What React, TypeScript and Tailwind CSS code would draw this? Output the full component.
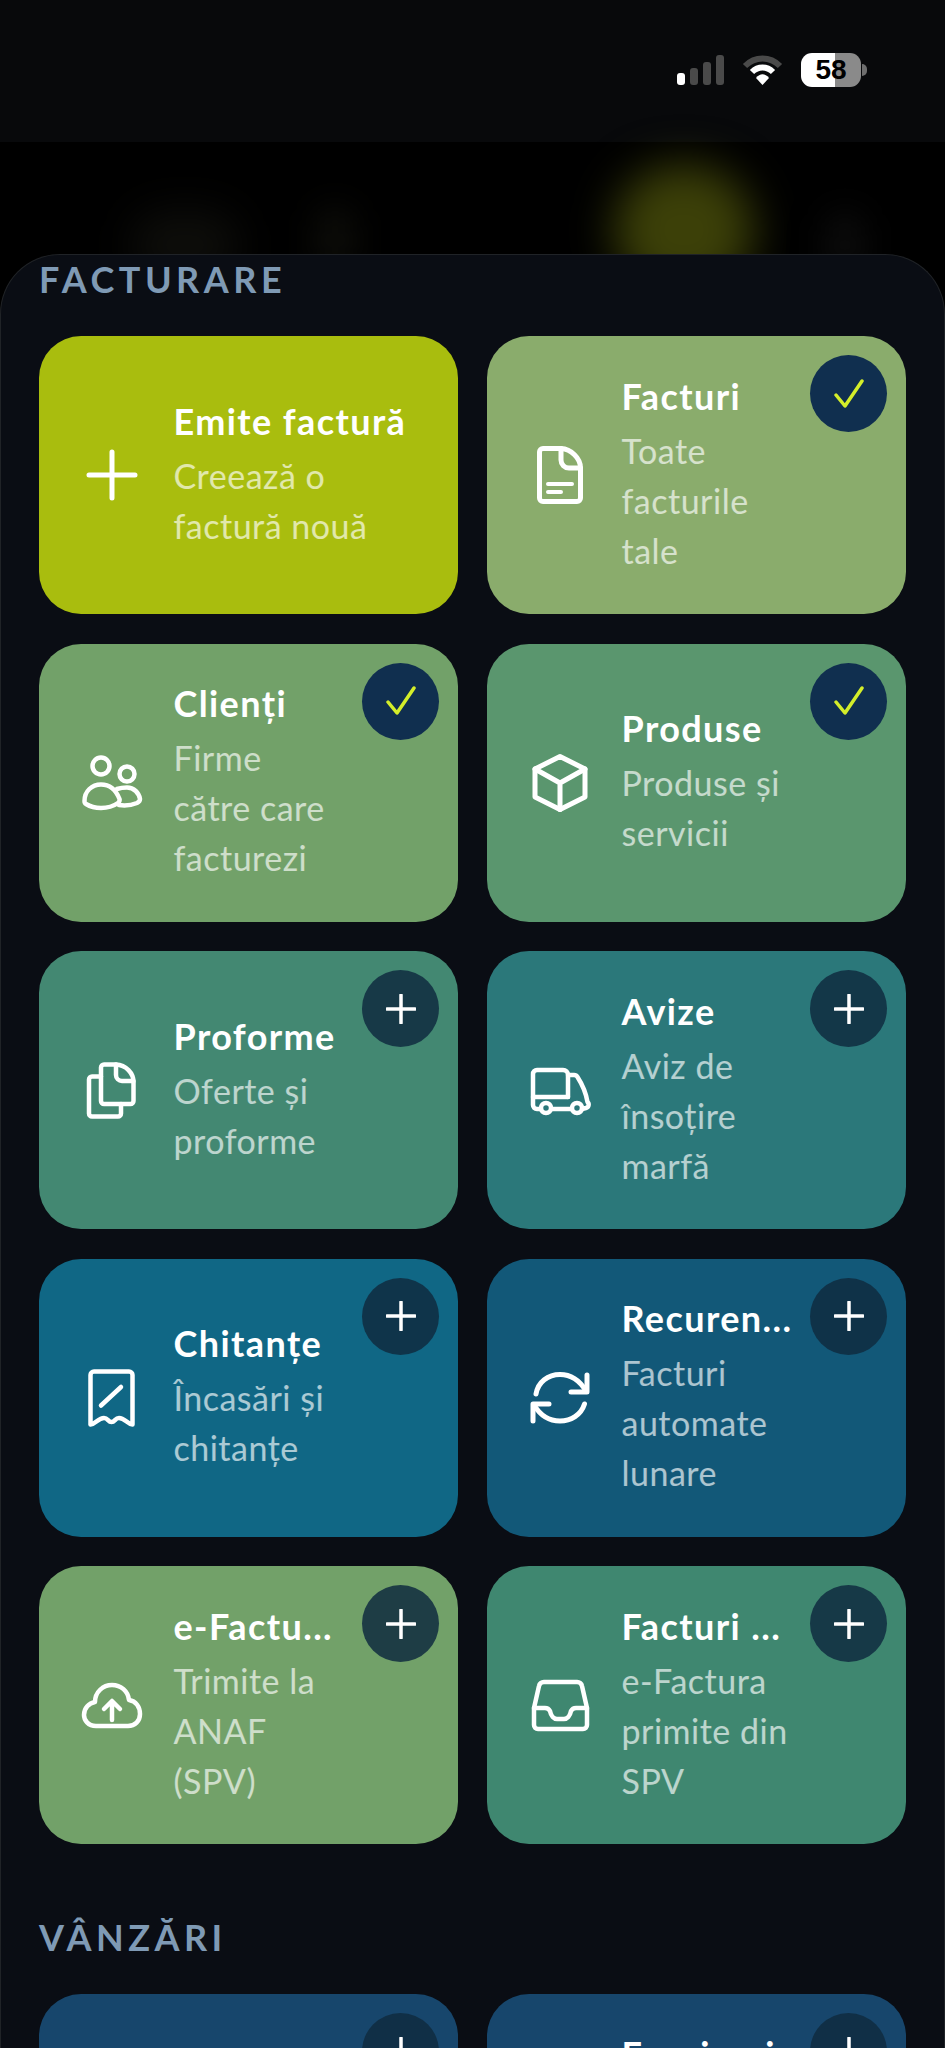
import type { ReactNode } from 'react'

type Tile = {
  title: string
  lines: string[]
  bg: string
  icon: ReactNode
  status?: 'added' | 'add' | 'none'
}

function Glyph({ children, width = 5 }: { children: ReactNode; width?: number }) {
  return (
    <svg
      viewBox="0 0 60 60"
      fill="none"
      stroke="currentColor"
      strokeWidth={width}
      strokeLinecap="round"
      strokeLinejoin="round"
      className="h-[60px] w-[60px] shrink-0 overflow-visible text-white"
    >
      {children}
    </svg>
  )
}

const PlusIcon = (
  <Glyph width={5}>
    <path d="M7 30H53M30 7V53" />
  </Glyph>
)

const FileIcon = (
  <Glyph>
    <path d="M13 3.5H31C41 4 50.5 13 50.5 23V53a3.5 3.5 0 0 1-3.5 3.5H13a3.5 3.5 0 0 1-3.5-3.5V7A3.5 3.5 0 0 1 13 3.5Z" />
    <path d="M31 3.5V15a8 8 0 0 0 8 8H50.5" />
    <path d="M18 39H42M18 47H31" strokeWidth={4} />
  </Glyph>
)

const UsersIcon = (
  <Glyph width={4.5}>
    <circle cx="19" cy="13" r="8.5" />
    <circle cx="45" cy="21" r="7.5" />
    <path d="M2.5 48C2.5 38 10 31.5 19 31.5C28 31.5 34 37 37.5 46C38 47.5 37 49 36 50C31 53.5 25 55 19 55C13 55 8 53.5 4 51C3 50.5 2.5 49.5 2.5 48Z" />
    <path d="M35 36C38 35 41 34.5 45 34.5C52 34.5 57 40 58 46C58 48 57 49 55 50C50 52 44 53 37 52" />
  </Glyph>
)

const BoxIcon = (
  <Glyph>
    <path d="M30 3.5L55 16V44L30 56.5L5 44V16Z" />
    <path d="M5 16L30 30L55 16M30 30V56.5" />
  </Glyph>
)

const CopyIcon = (
  <Glyph width={4.5}>
    <path d="M22 4.5H34C44 5 51.5 13 51.5 22V41a3 3 0 0 1-3 3H22a3 3 0 0 1-3-3V7.5a3 3 0 0 1 3-3Z" />
    <path d="M34 4.5V15a6 6 0 0 0 6 6H51.5" />
    <path d="M19 16.5H10a3 3 0 0 0-3 3V53.5a3 3 0 0 0 3 3H36a3 3 0 0 0 3-3V44" />
  </Glyph>
)

const TruckIcon = (
  <Glyph width={4.5}>
    <path d="M11 49H7a4 4 0 0 1-4-4V14a4 4 0 0 1 4-4H33a5 5 0 0 1 5 5V37" />
    <path d="M3 37H38M22 49H41" />
    <path d="M38 15H44a4 4 0 0 1 3.5 2C52 24 56 33 57.5 42a3.5 3.5 0 0 1-1.5 6L52 49" />
    <circle cx="16" cy="48" r="5" />
    <circle cx="47" cy="48" r="5" />
  </Glyph>
)

const ReceiptIcon = (
  <Glyph width={4.5}>
    <path d="M8.5 7A3.5 3.5 0 0 1 12 3.5H47A3.5 3.5 0 0 1 50.5 7V56.5C45 56 43 50 37 50C33 50 33 54 29.5 54C26 54 26 50 22 50C16 50 14 56 8.5 56.5Z" />
    <path d="M19 37.5L39 19" />
  </Glyph>
)

const RefreshIcon = (
  <Glyph>
    <path d="M6 26C8 14 18 6.5 30 6.5C41 6.5 50 13 56 23" />
    <path d="M54.5 36C51 47 41 53 30 53C19 53 10 47 4 37" />
    <path d="M57 7V24H41M3 53V36H19" />
  </Glyph>
)

const CloudIcon = (
  <Glyph width={4.5}>
    <path d="M14 51C6 51 2 45 2 40C2 33 7 28 13 27C13 17 21 10 30 10C39 10 46 16 47 25C54 26 58 32 58 39C58 46 53 51 46 51Z" />
    <path d="M30 45V27M22 34L30 26L38 34" />
  </Glyph>
)

const InboxIcon = (
  <Glyph width={4.5}>
    <path d="M4 33L9 11a5 5 0 0 1 5-4H47a5 5 0 0 1 5 4L57 33V50a4 4 0 0 1-4 4H8a4 4 0 0 1-4-4Z" />
    <path d="M4 33H15C18 33 19 34 20 36C21 41 24 44 27 44H34C37 44 40 41 41 36C42 34 43 33 46 33H57" />
  </Glyph>
)

const facturare: Tile[] = [
  { title: 'Emite factură', lines: ['Creează o', 'factură nouă'], bg: 'bg-[#a9bd0e]', icon: PlusIcon, status: 'none' },
  { title: 'Facturi', lines: ['Toate', 'facturile', 'tale'], bg: 'bg-[#8aac6c]', icon: FileIcon, status: 'added' },
  { title: 'Clienți', lines: ['Firme', 'către care', 'facturezi'], bg: 'bg-[#72a169]', icon: UsersIcon, status: 'added' },
  { title: 'Produse', lines: ['Produse și', 'servicii'], bg: 'bg-[#5a966e]', icon: BoxIcon, status: 'added' },
  { title: 'Proforme', lines: ['Oferte și', 'proforme'], bg: 'bg-[#438872]', icon: CopyIcon },
  { title: 'Avize', lines: ['Aviz de', 'însoțire', 'marfă'], bg: 'bg-[#2b787a]', icon: TruckIcon },
  { title: 'Chitanțe', lines: ['Încasări și', 'chitanțe'], bg: 'bg-[#106785]', icon: ReceiptIcon },
  { title: 'Recuren...', lines: ['Facturi', 'automate', 'lunare'], bg: 'bg-[#125878]', icon: RefreshIcon },
  { title: 'e-Factu...', lines: ['Trimite la', 'ANAF', '(SPV)'], bg: 'bg-[#72a169]', icon: CloudIcon },
  { title: 'Facturi ...', lines: ['e-Factura', 'primite din', 'SPV'], bg: 'bg-[#3f8770]', icon: InboxIcon },
]

// only the top of this row is on screen, the rest is below the fold
const vanzari: Tile[] = [
  { title: '', lines: [], bg: 'bg-[#17466c]', icon: null },
  { title: 'Furnizori', lines: ['\u00a0', '\u00a0', '\u00a0'], bg: 'bg-[#17466c]', icon: null },
]

function StatusBadge({ status }: { status: 'added' | 'add' }) {
  return (
    <div
      className={`absolute right-[19px] top-[19px] flex h-[77px] w-[77px] items-center justify-center rounded-full ${
        status === 'added' ? 'bg-[#102f4f]' : 'bg-[#0f2c40]/85'
      }`}
    >
      <svg viewBox="0 0 30 30" fill="none" strokeLinecap="round" strokeLinejoin="round" className="h-[30px] w-[30px]">
        {status === 'added' ? (
          <path d="M2 16L11 27L28 2" stroke="#d4ee2a" strokeWidth="3.5" />
        ) : (
          <path d="M1 15H29M15 1V29" stroke="#ffffff" strokeWidth="3.5" />
        )}
      </svg>
    </div>
  )
}

function TileCard({ tile }: { tile: Tile }) {
  const status = tile.status ?? 'add'
  return (
    <div className={`relative flex h-[278px] items-center gap-[32px] rounded-[42px] pl-[42.5px] ${tile.bg}`}>
      <div className="h-[60px] w-[60px] shrink-0">{tile.icon}</div>
      <div className="pb-[4px]">
        <div className="mb-[5px] whitespace-nowrap text-[36px] font-bold leading-[50px] tracking-[1.4px] text-white">
          {tile.title}
        </div>
        {tile.lines.map((line, index) => (
          <div key={index} className="whitespace-nowrap text-[34px] font-normal leading-[50px] tracking-[0.5px] text-white/65">
            {line}
          </div>
        ))}
      </div>
      {status !== 'none' && <StatusBadge status={status} />}
    </div>
  )
}

function Section({ title, tiles, className }: { title: string; tiles: Tile[]; className?: string }) {
  return (
    <section className={className}>
      <h2 className="mb-[37px] text-[36px] font-bold uppercase leading-[40px] tracking-[4.5px] text-[#7f9ab5]">{title}</h2>
      <div className="grid grid-cols-2 gap-x-[29px] gap-y-[29.5px]">
        {tiles.map((tile) => (
          <TileCard key={tile.title} tile={tile} />
        ))}
      </div>
    </section>
  )
}

function StatusIcons() {
  return (
    <div className="flex h-[142px] items-center justify-end gap-[18px] bg-[#08090b] pb-[2px] pr-[78px]">
      <div className="flex h-[30px] items-end gap-[5px]">
        <div className="h-[12px] w-[8px] rounded-[3px] bg-white" />
        <div className="h-[17px] w-[8px] rounded-[3px] bg-[#4a4a4a]" />
        <div className="h-[23px] w-[8px] rounded-[3px] bg-[#4a4a4a]" />
        <div className="h-[30px] w-[8px] rounded-[3px] bg-[#4a4a4a]" />
      </div>
      <svg viewBox="0 0 41 30" className="h-[30px] w-[41px]" fill="none" strokeWidth="6">
        <path d="M3 11C13 1 28 1 38 11" stroke="#4a4a4a" />
        <path d="M10 17C16 11 25 11 31 17" stroke="#ffffff" />
        <path d="M14 23C18 18 23 18 27 23L20.5 30Z" fill="#ffffff" stroke="none" />
      </svg>
      <div className="flex items-center gap-[1px]">
        <div className="flex h-[34px] w-[60px] items-center justify-center rounded-[11px] bg-[linear-gradient(90deg,#ffffff_57%,#8a8a8a_57%)] font-['Liberation_Sans',sans-serif] text-[28px] font-bold leading-none text-black">
          58
        </div>
        <div className="h-[12px] w-[5px] rounded-r-full bg-[#6e6e6e]" />
      </div>
    </div>
  )
}

export default function App() {
  return (
    <div className="relative h-[2048px] w-[945px] overflow-hidden bg-black font-['Lato',sans-serif]">
      <StatusIcons />
      <div className="absolute left-[614px] top-[165px] h-[130px] w-[140px] rounded-full bg-[#3c4008] blur-[22px]" />
      <div className="absolute left-[130px] top-[210px] h-[70px] w-[110px] rounded-full bg-[#0d0d0a] blur-[20px]" />
      <div className="absolute left-[315px] top-[205px] h-[70px] w-[40px] rounded-full bg-[#0c0c08] blur-[16px]" />
      <div className="absolute left-[825px] top-[210px] h-[70px] w-[40px] rounded-full bg-[#0b0b0b] blur-[16px]" />
      <div className="relative mt-[112px] h-[1794px] rounded-t-[60px] border-x border-t border-[#202327] bg-[#0a0d14] px-[38px] pt-[4px]">
        <Section title="Facturare" tiles={facturare} />
        <Section title="Vânzări" tiles={vanzari} className="mt-[73px]" />
      </div>
    </div>
  )
}
